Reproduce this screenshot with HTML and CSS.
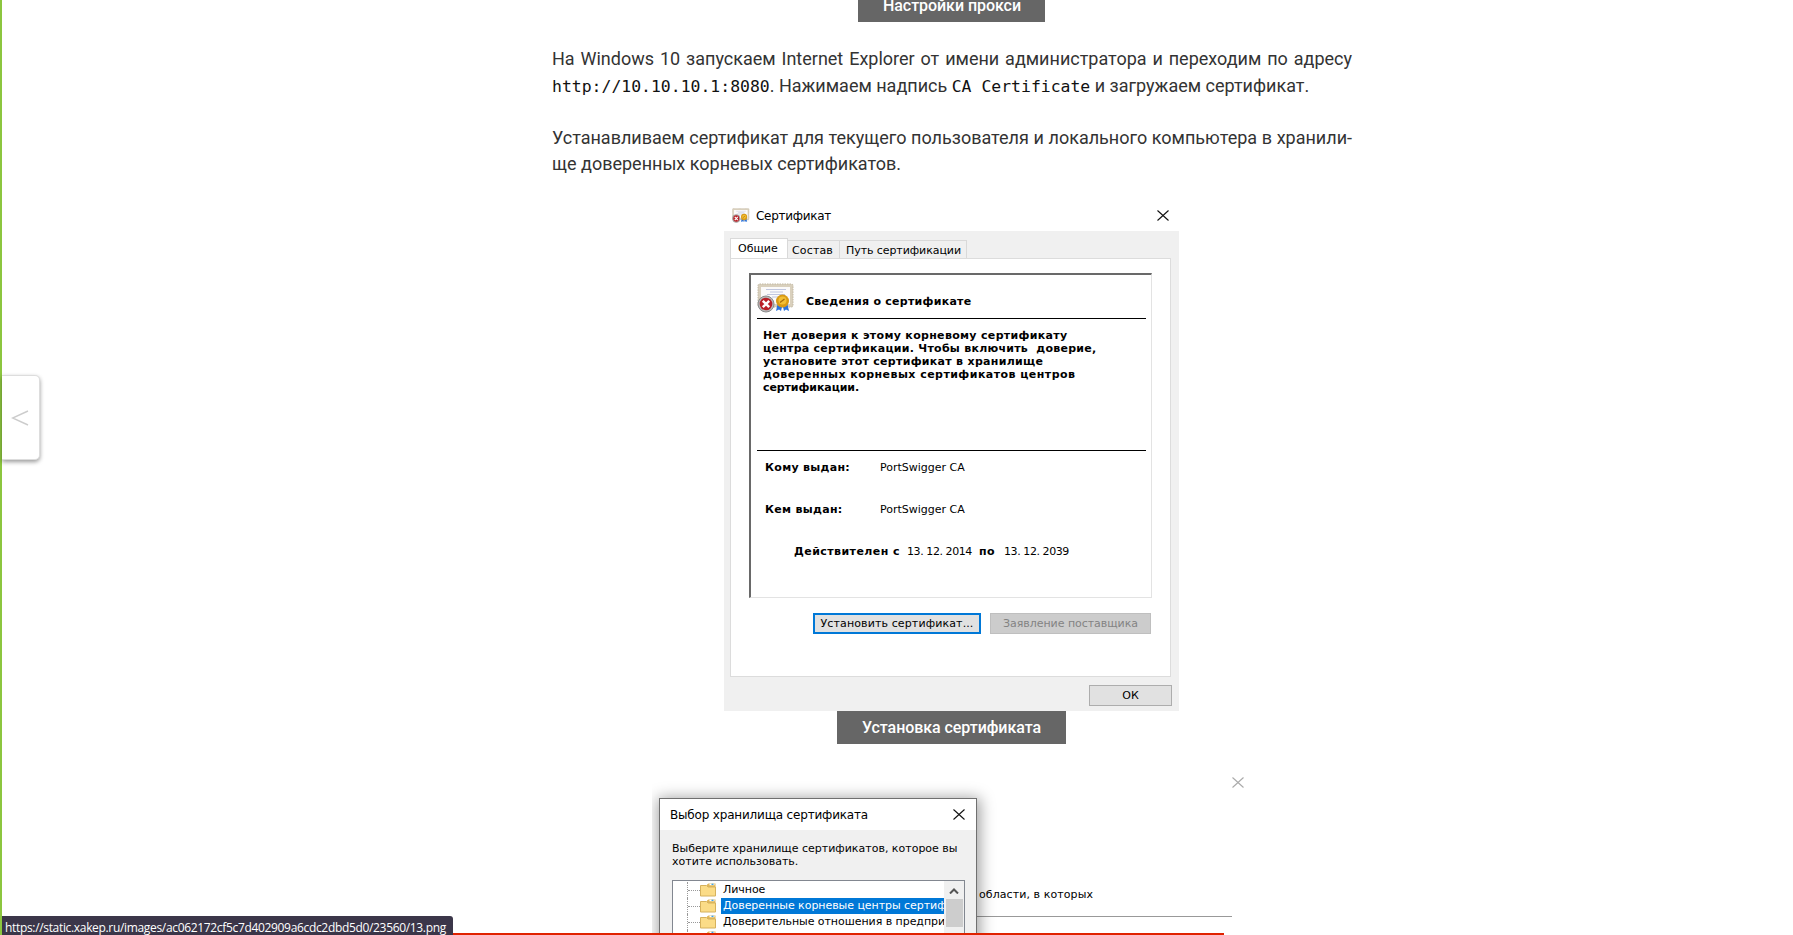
FILE: index.html
```
<!DOCTYPE html>
<html lang="ru">
<head>
<meta charset="utf-8">
<title>Xakep</title>
<link rel="stylesheet" href="styles.css">
</head>
<body>
<main class="article">
  <div class="caption caption-top"><span class="ls-a">Настройки прокси</span></div>
  <p class="text first">На Windows 10 запускаем Internet Explorer от имени администратора и переходим по адресу <code>http://10.10.10.1:8080</code>. Нажимаем надпись <code>CA Certificate</code> и загружаем сертификат.</p>
  <p class="text second">Устанавливаем сертификат для текущего пользователя и локального компьютера в хранили&shy;ще доверенных корневых сертификатов.</p>

  <figure class="cert">
    <div class="titlebar">
      <svg class="cert-icon-small" viewBox="0 0 38 30" preserveAspectRatio="none"><use href="#cert"/></svg>
      <span class="ls-title">Сертификат</span>
      <svg class="close" viewBox="0 0 12 11"><path d="M.5.5l11 10M11.5.5l-11 10"/></svg>
    </div>
    <div class="cert-body">
      <div class="tabs">
        <span class="tab active"><span class="ls-tab1">Общие</span></span>
        <span class="tab"><span class="ls-tab2">Состав</span></span>
        <span class="tab wide"><span class="ls-tab3">Путь сертификации</span></span>
      </div>
      <div class="panel">
        <div class="frame">
          <div class="info-head">
            <svg class="cert-icon" viewBox="0 0 38 30">
              <g id="cert">
                <rect x="1" y="1" width="35" height="23" rx="1.5" fill="#d9d0bd"/>
                <rect x="1" y="1" width="35" height="23" rx="1.5" fill="none" stroke="#c2b8a3" stroke-dasharray="1.5 1"/>
                <rect x="4" y="4" width="29" height="17" fill="#fbfafa"/>
                <path d="M9 6.500h20M13 9h13M10 11.500h18M15 14h10" stroke="#b9c0da" stroke-width=".9"/>
                <path d="M21 19l-2 9 3-1.500 2 1.500 1.500-6 1.500 6 2-1.500 3 1.500-2-9z" fill="#2c73dc"/>
                <circle cx="25.500" cy="18" r="6.500" fill="#d99a13"/>
                <circle cx="25.500" cy="17.500" r="4" fill="#f2bf35"/>
                <path d="M23 19.500l4.500-3.500" stroke="#a86e08" stroke-width="1.300"/>
                <circle cx="9" cy="21" r="8" fill="#b9b9b9" stroke="#8b8b8b"/>
                <circle cx="9" cy="21" r="6.300" fill="#b91f27"/>
                <path d="M5.800 17.800l6.400 6.400M12.200 17.800l-6.400 6.400" stroke="#fff" stroke-width="2.500"/>
              </g>
            </svg>
            <b class="ls-head">Сведения о сертификате</b>
          </div>
          <div class="notice">
            <b class="ls-n1">Нет доверия к этому корневому сертификату</b>
            <b class="ls-n2">центра сертификации. Чтобы включить&nbsp; доверие,</b>
            <b class="ls-n3">установите этот сертификат в хранилище</b>
            <b class="ls-n4">доверенных корневых сертификатов центров</b>
            <b class="ls-n5">сертификации.</b>
          </div>
          <div class="row"><b class="ls-r1">Кому выдан:</b><span>PortSwigger CA</span></div>
          <div class="row"><b class="ls-r1">Кем выдан:</b><span>PortSwigger CA</span></div>
          <div class="dates"><b class="ls-d1">Действителен с</b><span class="ls-date date1">13. 12. 2014</span><b class="ls-po">по</b><span class="ls-date">13. 12. 2039</span></div>
        </div>
        <div class="buttons">
          <span class="btn primary"><span class="ls-b1">Установить сертификат...</span></span>
          <span class="btn disabled"><span class="ls-b2">Заявление поставщика</span></span>
        </div>
      </div>
      <span class="btn ok"><span>ОК</span></span>
    </div>
    <figcaption class="caption"><span class="ls-a">Установка сертификата</span></figcaption>
  </figure>

  <figure class="store">
    <div class="wizard">
      <svg class="close faded" viewBox="0 0 12 11"><path d="M.5.5l11 10M11.500.5l-11 10"/></svg>
      <div class="wizard-text"><span class="ls-w">области, в которых</span></div>
    </div>
    <div class="dialog">
      <div class="dialog-title"><span class="ls-dt">Выбор хранилища сертификата</span>
        <svg class="close" viewBox="0 0 12 11"><path d="M.5.5l11 10M11.500.5l-11 10"/></svg>
      </div>
      <div class="prompt"><span>Выберите хранилище сертификатов, которое вы</span><span>хотите использовать.</span></div>
      <div class="tree">
        <div class="items">
          <div class="item"><svg class="folder" viewBox="0 0 16 14"><g id="folder"><path d="M7 1.500L8.500.5H15.500V13H7z" fill="#e0b75a"/><path d="M9.500 1.500h5" stroke="#fff" stroke-width="1.500"/><path d="M11.500 1.300h2" stroke="#2f9be8" stroke-width="1.300"/><path d="M.5 2.500h6l1.500 1.500h7.500v9H.5z" fill="#fbdc87" stroke="#d6b25d"/></g></svg><span class="name">Личное</span></div>
          <div class="item selected"><svg class="folder" viewBox="0 0 16 14"><use href="#folder"/></svg><span class="name">Доверенные корневые центры сертиф</span></div>
          <div class="item"><svg class="folder" viewBox="0 0 16 14"><use href="#folder"/></svg><span class="name">Доверительные отношения в предпри</span></div>
          <div class="item"><svg class="folder" viewBox="0 0 16 14"><use href="#folder"/></svg><span class="name"></span></div>
        </div>
        <div class="scroll"><svg class="up" viewBox="0 0 10 6"><path d="M1 5.500l4-4 4 4"/></svg><div class="thumb"></div></div>
      </div>
    </div>
  </figure>
</main>
<div class="edge"></div>
<div class="prev"><svg viewBox="0 0 18 16"><path d="M17 1L1.500 8 17 15"/></svg></div>
<div class="redline"></div>
<div class="status"><span>https://static.xakep.ru/images/ac062172cf5c7d402909a6cdc2dbd5d0/23560/13.png</span></div>
</body>
</html>
```
FILE: styles.css
```
* { box-sizing: border-box; }
body { margin: 0; height: 935px; overflow: hidden; position: relative; background: #fff; font-family: "DejaVu Sans", sans-serif; font-size: 11px; color: #000; }
.article { width: 800px; margin-left: 552px; display: flex; flex-direction: column; align-items: center; }
.caption { height: 33px; padding: 0 25px; background: #666; color: #fff; font: 500 16px/33px Roboto, sans-serif; white-space: nowrap; }
.caption-top { width: 187px; margin: -11px 1px 0 0; }
.text { width: 800px; margin: 0; font: 18px/26px Roboto, sans-serif; color: #333; text-align: justify; }
.text code { font: 16.45px/29px "DejaVu Sans Mono", monospace; color: #111; }
.first { margin-top: 24px; height: 53px; }
.second { margin-top: 26px; }
.titlebar span, .tab span, .btn span, b, .row span, .dates span, .prompt span, .dialog-title span, .wizard-text span, .name, .status span { white-space: nowrap; }

.ls-a { letter-spacing: -.056px; }
.ls-title { letter-spacing: -.28px; }
.ls-tab2 { letter-spacing: .15px; }
.ls-tab3 { letter-spacing: -.074px; }
.ls-head { letter-spacing: .26px; }
.ls-n1 { letter-spacing: .32px; }
.ls-n2 { letter-spacing: .265px; }
.ls-n3 { letter-spacing: .29px; }
.ls-n4 { letter-spacing: .455px; }
.ls-n5 { letter-spacing: -.09px; }
.ls-r1 { letter-spacing: .3px; }
.ls-d1 { letter-spacing: .44px; }
.ls-date { letter-spacing: -.42px; }
.ls-po { letter-spacing: .4px; }
.ls-b1 { letter-spacing: .124px; }
.ls-b2 { letter-spacing: -.04px; }
.ls-w { letter-spacing: .08px; }
.ls-dt { letter-spacing: -.183px; }

.cert { width: 455px; margin: 19px 1px 0 0; display: flex; flex-direction: column; align-items: center; }
.titlebar { width: 455px; height: 35px; padding: 4px 10px 0 8px; display: flex; align-items: center; font-size: 12px; }
.cert-icon-small { width: 18px; height: 15px; margin-right: 6px; }
.close { width: 12px; height: 11px; margin-left: auto; fill: none; stroke: #111; stroke-width: 1.1; }
.cert-body { width: 455px; height: 480px; background: #f0f0f0; padding: 7px 7px 5px 6px; display: flex; flex-direction: column; }
.tabs { height: 20px; display: flex; align-items: flex-end; }
.tab { height: 18px; border: 1px solid #d9d9d9; border-width: 1px 1px 0 0; padding: 0 4px; width: 52px; line-height: 19px; }
.tab.active { height: 21px; width: 58px; margin-bottom: -1px; background: #fff; border-left-width: 1px; padding: 0 7px; line-height: 19px; }
.tab.wide { width: 127px; padding-left: 6px; }
.panel { width: 441px; height: 419px; border: 1px solid #dcdcdc; background: #fff; padding: 14px 19px 14px 18px; display: flex; flex-direction: column; }
.frame { width: 403px; height: 325px; border: 2px solid; border-color: #696969 #e3e3e3 #e3e3e3 #696969; border-right-width: 1px; border-bottom-width: 1px; padding: 8px 5px 0 6px; }
.info-head { height: 36px; display: flex; align-items: center; border-bottom: 1px solid #000; padding-bottom: 5px; }
.info-head b { padding-top: 7px; }
.cert-icon { width: 38px; height: 30px; margin-right: 11px; }
.notice { height: 132px; padding: 10px 0 0 6px; border-bottom: 1px solid #000; display: flex; flex-direction: column; line-height: 13px; }
.row { display: flex; padding-left: 8px; height: 42px; line-height: 34px; }
.row b { width: 115px; }
.dates { display: flex; padding-left: 37px; line-height: 34px; }
.dates b { width: 113px; }
.dates .date1 { width: 72px; }
.dates .ls-po { width: 25px; }
.buttons { display: flex; justify-content: flex-end; gap: 9px; margin-top: 15px; }
.btn { display: flex; justify-content: center; height: 21px; line-height: 19px; background: #e1e1e1; border: 1px solid #adadad; }
.primary { width: 168px; border: 2px solid #0078d7; line-height: 17px; }
.disabled { width: 161px; background: #ccc; border-color: #bfbfbf; color: #838383; }
.ok { width: 83px; align-self: flex-end; margin-top: 8px; }

.store { width: 610px; height: 191px; margin: 21px 0 0; align-self: flex-start; margin-left: 100px; position: relative; overflow: hidden; }
.wizard { height: 152px; width: 573px; margin-left: 7px; border-bottom: 1px solid #999; display: flex; flex-direction: column; }
.faded { margin: 12px -12px 0 0; align-self: flex-end; stroke: #aaa; flex: none; }
.wizard-text { margin: 100px 0 0 320px; line-height: 14px; }
.dialog { position: absolute; left: 7px; top: 33px; width: 318px; height: 220px; background: #f0f0f0; border: 1px solid #707070; box-shadow: 1px 2px 14px 2px rgba(0,0,0,.38); }
.dialog-title { display: flex; align-items: center; height: 31px; background: #fff; padding: 0 11px 0 10px; font-size: 12px; }
.prompt { display: flex; flex-direction: column; line-height: 13px; padding: 12px 0 0 12px; height: 50px; }
.tree { margin-left: 12px; width: 293px; height: 140px; border: 1px solid #828790; background: #fff; display: flex; }
.items { width: 271px; overflow: hidden; padding: 1px 0 0 14px; }
.item { display: flex; align-items: center; height: 16px; width: 257px; border-left: 1px dotted #999; }
.item::before { content: ""; width: 12px; border-top: 1px dotted #999; flex: none; }
.folder { width: 16px; height: 14px; flex: none; margin-right: 5px; }
.name { padding-left: 2px; height: 16px; line-height: 16px; width: 223px; letter-spacing: -.05px; }
.selected .name { background: #0078d7; color: #fff; }
.scroll { position: relative; width: 20px; background: #f0f0f0; display: flex; flex-direction: column; align-items: center; }
.up { width: 10px; height: 6px; margin-top: 7px; fill: none; stroke: #555; stroke-width: 2; }
.thumb { width: 17px; height: 28px; margin-top: 5px; background: #cdcdcd; }

.edge { position: absolute; left: 0; top: 0; width: 2px; height: 935px; background: #8cc63f; }
.prev { position: absolute; left: 2px; top: 375px; width: 38px; height: 85px; border: 1px solid #ddd; border-left: 0; border-radius: 0 5px 5px 0; background: #fff; box-shadow: 0 2px 4px rgba(0,0,0,.4); display: flex; align-items: center; padding-left: 9px; }
.prev svg { width: 18px; height: 16px; fill: none; stroke: #ccc; stroke-width: 1.4; }
.redline { position: absolute; left: 440px; top: 933px; width: 784px; height: 2px; background: #e02200; }
.status { position: absolute; left: 2px; top: 916px; width: 451px; height: 19px; padding-left: 3px; background: #3b3649; border-radius: 0 3px 0 0; color: #fff; font: 12px/23px "Open Sans", sans-serif; letter-spacing: -.33px; }
```
